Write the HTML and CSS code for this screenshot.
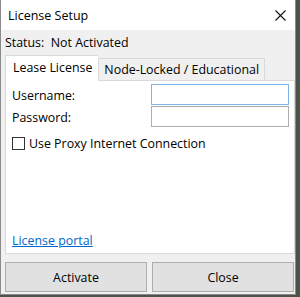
FILE: index.html
```html
<!DOCTYPE html>
<html lang="en">
<head>
    <meta charset="UTF-8">
    <title>License Setup</title>
    <link rel="stylesheet" href="styles.css">
</head>
<body>
    <div class="window">
        <div class="titlebar">
            <span class="title">License Setup</span>
            <svg class="close" width="11" height="11" viewBox="0 0 11 11">
                <path d="M0.5 0.5 L10.5 10.5 M10.5 0.5 L0.5 10.5" stroke="#111" stroke-width="1.1" fill="none"/>
            </svg>
        </div>
        <div class="content">
            <div class="status">Status:&nbsp; Not Activated</div>
            <div class="tabs">
                <div class="tab active">Lease License</div>
                <div class="tab">Node-Locked / Educational</div>
            </div>
            <div class="panel">
                <div class="row">
                    <label>Username:</label>
                    <input type="text" class="field focused">
                </div>
                <div class="row">
                    <label>Password:</label>
                    <input type="password" class="field">
                </div>
                <div class="check">
                    <span class="box"></span>
                    <span>Use Proxy Internet Connection</span>
                </div>
                <a class="portal" href="#">License portal</a>
            </div>
            <div class="buttons">
                <button class="btn">Activate</button>
                <button class="btn">Close</button>
            </div>
        </div>
    </div>
</body>
</html>
```

FILE: styles.css
```css
body { margin: 0; background: #4a524a; font-family: "Open Sans", "Noto Sans", sans-serif; font-size: 12.4px; color: #000; }
.window {
    width: 294px;
    height: 294px;
    border: 1px solid #8a8a8a;
    border-top: none;
    background: #f0f0f0;
    display: flex;
    flex-direction: column;
}
.titlebar {
    height: 31px;
    background: #fff;
    display: flex;
    align-items: center;
    justify-content: space-between;
    padding: 0 9px 0 7px;
}
.title { font-size: 12.5px; }
.content {
    flex: 1;
    display: flex;
    flex-direction: column;
    padding: 0 0 2px 4px;
}
.status { height: 25px; line-height: 25px; }
.tabs { display: flex; align-items: flex-end; height: 25px; }
.tab {
    height: 22px;
    line-height: 21px;
    padding: 0 5px;
    background: #f0f0f0;
    border: 1px solid #d9d9d9;
    border-bottom: none;
    box-sizing: border-box;
}
.tab.active {
    height: 26px;
    margin-bottom: -1px;
    background: #fff;
    padding: 0 6px 0 7px;
    line-height: 24px;
    border-right: none;
    position: relative;
    z-index: 1;
}
.panel {
    height: 174px;
    background: #fff;
    border: 1px solid #d9d9d9;
    box-sizing: border-box;
    padding: 3px 5px 0 6px;
    display: flex;
    flex-direction: column;
}
.row { display: flex; justify-content: space-between; align-items: center; height: 21px; margin-bottom: 1px; }
.row label { padding-top: 1px; }
.field {
    width: 138px;
    height: 21px;
    box-sizing: border-box;
    border: 1px solid #adadad;
    margin: 0;
    padding: 0;
}
.field.focused { border-color: #7eb4ea; }
.check { display: flex; align-items: center; margin-top: 7px; height: 16px; }
.box {
    width: 13px;
    height: 13px;
    box-sizing: border-box;
    border: 1px solid #333;
    margin-right: 4px;
}
.portal { margin-top: auto; margin-bottom: 4px; color: #0066cc; text-decoration: underline; align-self: flex-start; }
.buttons { display: flex; gap: 5px; margin-top: 8px; padding-right: 1px; }
.btn {
    flex: 1;
    height: 30px;
    background: #e1e1e1;
    border: 1px solid #adadad;
    font-family: inherit;
    font-size: 12.4px;
    color: #000;
}
```
